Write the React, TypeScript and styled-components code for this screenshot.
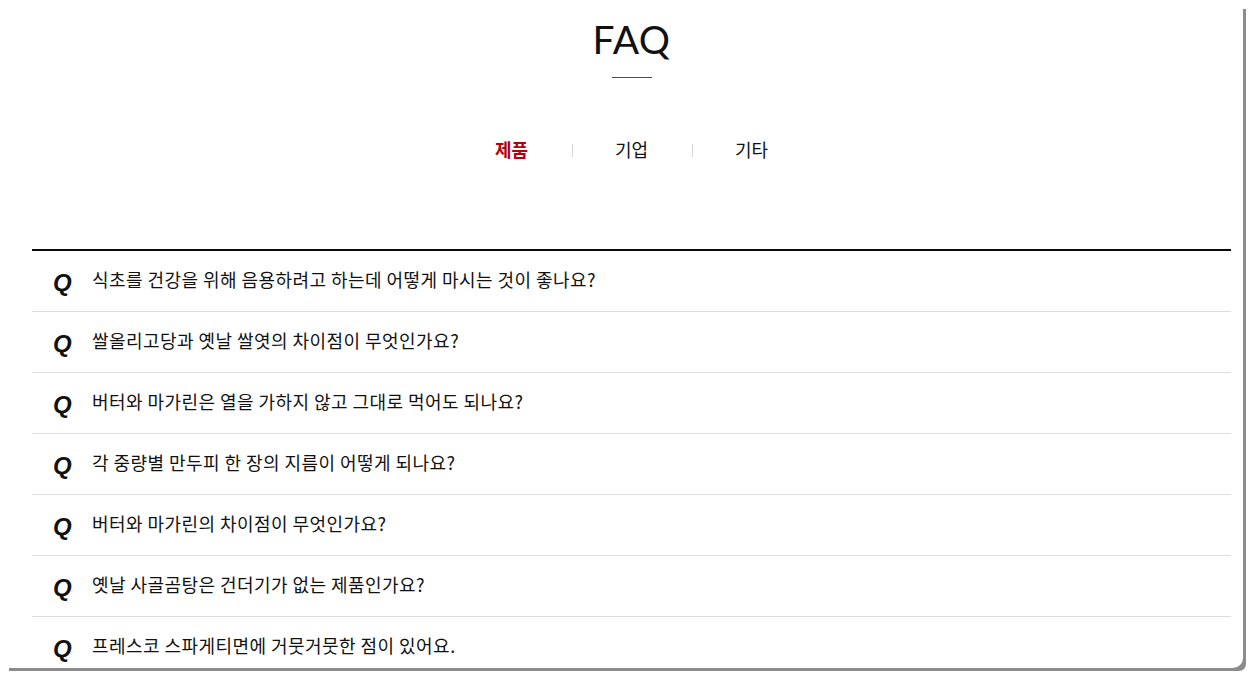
import React, { useState } from "react";
import styled, { createGlobalStyle } from "styled-components";

const GlobalStyle = createGlobalStyle`
  html, body { margin: 0; padding: 0; background: #ffffff; }
  body { font-family: "Noto Sans CJK KR", "Noto Sans", sans-serif; color: #111; overflow: hidden; }
  * { box-sizing: border-box; }
`;

const Page = styled.div`
  width: 1250px;
  height: 675px;
  background: #fff;
`;

const Card = styled.div`
  width: 1243px;
  height: 668px;
  background: #fff;
  border-bottom-right-radius: 10px;
  box-shadow: 6px 6px 0 -3px #8c8c8c;
  overflow: hidden;
`;

const Inner = styled.div`
  width: 1199px;
  margin-left: 32px;
  display: flex;
  flex-direction: column;
  align-items: center;
`;

const Title = styled.h2`
  margin: 0;
  padding-top: 14px;
  font-family: "Lato", sans-serif;
  font-weight: 400;
  font-size: 39px;
  line-height: 50px;
  color: #111;
  letter-spacing: 0.5px;
`;

const RedLine = styled.div`
  width: 40px;
  height: 1px;
  background: #c8101e;
  margin-top: 13px;
`;

const Tabs = styled.ul`
  list-style: none;
  margin: 59px 0 0;
  padding: 0;
  display: flex;
`;

const Tab = styled.li<{ $active?: boolean; $first?: boolean }>`
  width: 120px;
  text-align: center;
  font-size: 18px;
  line-height: 24px;
  font-weight: ${(p) => (p.$active ? 700 : 400)};
  color: ${(p) => (p.$active ? "#b3000f" : "#111")};
  position: relative;
  cursor: pointer;
  &::before {
    content: "";
    display: ${(p) => (p.$first ? "none" : "block")};
    position: absolute;
    left: 0;
    top: 7px;
    width: 1px;
    height: 13px;
    background: #cdd6dc;
  }
`;

const List = styled.ul`
  list-style: none;
  margin: 88px 0 0;
  padding: 0;
  width: 100%;
  border-top: 2px solid #0a0a0a;
`;

const Row = styled.li`
  display: flex;
  align-items: center;
  height: 61px;
  border-bottom: 1px solid #dcdcdc;
  padding: 0 0 4px 21px;
`;

const QMark = styled.span`
  font-family: "Liberation Sans", Arial, sans-serif;
  font-weight: 700;
  font-style: italic;
  font-size: 24px;
  width: 39px;
  color: #111;
  margin-top: 8px;
`;

const Question = styled.span`
  font-size: 18px;
  color: #111;
  letter-spacing: 0.45px;
`;

const questions = [
  "식초를 건강을 위해 음용하려고 하는데 어떻게 마시는 것이 좋나요?",
  "쌀올리고당과 옛날 쌀엿의 차이점이 무엇인가요?",
  "버터와 마가린은 열을 가하지 않고 그대로 먹어도 되나요?",
  "각 중량별 만두피 한 장의 지름이 어떻게 되나요?",
  "버터와 마가린의 차이점이 무엇인가요?",
  "옛날 사골곰탕은 건더기가 없는 제품인가요?",
  "프레스코 스파게티면에 거뭇거뭇한 점이 있어요.",
];

const tabs = ["제품", "기업", "기타"];

export default function App() {
  const [active, setActive] = useState(0);
  return (
    <Page>
      <GlobalStyle />
      <Card>
        <Inner>
          <Title>FAQ</Title>
          <RedLine />
          <Tabs>
            {tabs.map((t, i) => (
              <Tab key={t} $active={i === active} $first={i === 0} onClick={() => setActive(i)}>
                {t}
              </Tab>
            ))}
          </Tabs>
          <List>
            {questions.map((q) => (
              <Row key={q}>
                <QMark>Q</QMark>
                <Question>{q}</Question>
              </Row>
            ))}
          </List>
        </Inner>
      </Card>
    </Page>
  );
}
